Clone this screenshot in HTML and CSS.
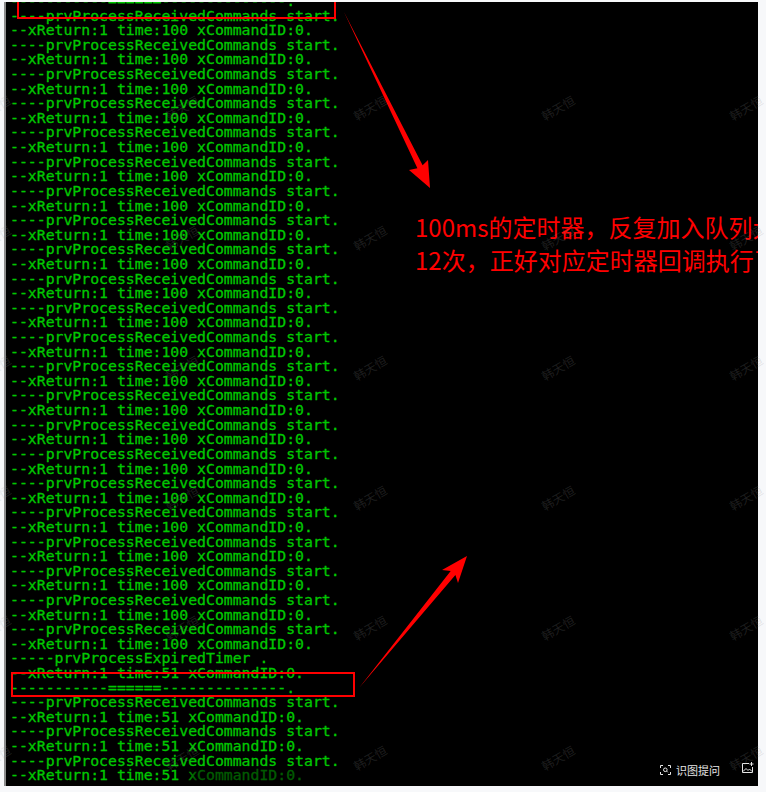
FILE: index.html
```html
<!DOCTYPE html>
<html lang="zh-CN">
<head>
<meta charset="utf-8">
<title>Terminal log</title>
<link rel="stylesheet" href="styles.css">
</head>
<body>
<div class="screen">
  <div class="panel">
<pre class="log">-----------======--------------.
----prvProcessReceivedCommands start.
--xReturn:1 time:100 xCommandID:0.
----prvProcessReceivedCommands start.
--xReturn:1 time:100 xCommandID:0.
----prvProcessReceivedCommands start.
--xReturn:1 time:100 xCommandID:0.
----prvProcessReceivedCommands start.
--xReturn:1 time:100 xCommandID:0.
----prvProcessReceivedCommands start.
--xReturn:1 time:100 xCommandID:0.
----prvProcessReceivedCommands start.
--xReturn:1 time:100 xCommandID:0.
----prvProcessReceivedCommands start.
--xReturn:1 time:100 xCommandID:0.
----prvProcessReceivedCommands start.
--xReturn:1 time:100 xCommandID:0.
----prvProcessReceivedCommands start.
--xReturn:1 time:100 xCommandID:0.
----prvProcessReceivedCommands start.
--xReturn:1 time:100 xCommandID:0.
----prvProcessReceivedCommands start.
--xReturn:1 time:100 xCommandID:0.
----prvProcessReceivedCommands start.
--xReturn:1 time:100 xCommandID:0.
----prvProcessReceivedCommands start.
--xReturn:1 time:100 xCommandID:0.
----prvProcessReceivedCommands start.
--xReturn:1 time:100 xCommandID:0.
----prvProcessReceivedCommands start.
--xReturn:1 time:100 xCommandID:0.
----prvProcessReceivedCommands start.
--xReturn:1 time:100 xCommandID:0.
----prvProcessReceivedCommands start.
--xReturn:1 time:100 xCommandID:0.
----prvProcessReceivedCommands start.
--xReturn:1 time:100 xCommandID:0.
----prvProcessReceivedCommands start.
--xReturn:1 time:100 xCommandID:0.
----prvProcessReceivedCommands start.
--xReturn:1 time:100 xCommandID:0.
----prvProcessReceivedCommands start.
--xReturn:1 time:100 xCommandID:0.
----prvProcessReceivedCommands start.
--xReturn:1 time:100 xCommandID:0.
-----prvProcessExpiredTimer .
--xReturn:1 time:51 xCommandID:0.
-----------======--------------.
----prvProcessReceivedCommands start.
--xReturn:1 time:51 xCommandID:0.
----prvProcessReceivedCommands start.
--xReturn:1 time:51 xCommandID:0.
----prvProcessReceivedCommands start.
--xReturn:1 time:51 xCommandID:0.</pre>
    <svg class="marks" width="766" height="792" viewBox="0 0 766 792" aria-hidden="true">
      <rect x="18" y="-10" width="317" height="28" fill="none" stroke="#ff0000" stroke-width="2"/>
      <rect x="12" y="673" width="342" height="23" fill="none" stroke="#ff0000" stroke-width="2"/>
      <polygon fill="#ff0000" points="344,12 422.6,165.2 428,160 430,188 409,170 417.4,168.3"/>
      <polygon fill="#ff0000" points="359,688 450.7,571.1 442,570 467,556 458,583 455.4,574.9"/>
    </svg>
    <p class="note"><span class="note-line">100ms的定时器，反复加入队列大概</span><span class="note-line">12次，正好对应定时器回调执行了12次</span></p>
    <div class="fade"></div>
    <div class="tools">
      <span class="tool">
        <svg class="tool-icon" width="11" height="10" viewBox="0 0 11 10" aria-hidden="true">
          <path d="M0.5 3V0.5H3M8 0.5H10.5V3M10.5 7V9.5H8M3 9.5H0.5V7" fill="none" stroke="#e6e6e6" stroke-width="1"/>
          <circle cx="5.3" cy="4.8" r="1.8" fill="none" stroke="#e6e6e6" stroke-width="1"/>
          <path d="M6.6 6.1L7.8 7.3" stroke="#e6e6e6" stroke-width="1"/>
        </svg>
        识图提问
      </span>
      <svg class="img-icon" width="12" height="11" viewBox="0 0 12 11" aria-hidden="true">
        <path d="M7 1.5H0.5V10.5H10.5V5" fill="none" stroke="#e6e6e6" stroke-width="1"/>
        <path d="M1 9.5L4 6.5L6 8.5L7.5 7L10 9.5" fill="none" stroke="#e6e6e6" stroke-width="1"/>
        <path d="M9.5 0V4M7.5 2H11.5" stroke="#e6e6e6" stroke-width="1"/>
      </svg>
    </div>
  </div>
  <div class="watermarks" aria-hidden="true">
    <span class="wm" style="left:-24px;top:100px">韩天恒</span>
    <span class="wm" style="left:164px;top:100px">韩天恒</span>
    <span class="wm" style="left:352px;top:100px">韩天恒</span>
    <span class="wm" style="left:540px;top:100px">韩天恒</span>
    <span class="wm" style="left:728px;top:100px">韩天恒</span>
    <span class="wm" style="left:-24px;top:230px">韩天恒</span>
    <span class="wm" style="left:164px;top:230px">韩天恒</span>
    <span class="wm" style="left:352px;top:230px">韩天恒</span>
    <span class="wm" style="left:540px;top:230px">韩天恒</span>
    <span class="wm" style="left:728px;top:230px">韩天恒</span>
    <span class="wm" style="left:-24px;top:360px">韩天恒</span>
    <span class="wm" style="left:164px;top:360px">韩天恒</span>
    <span class="wm" style="left:352px;top:360px">韩天恒</span>
    <span class="wm" style="left:540px;top:360px">韩天恒</span>
    <span class="wm" style="left:728px;top:360px">韩天恒</span>
    <span class="wm" style="left:-24px;top:490px">韩天恒</span>
    <span class="wm" style="left:164px;top:490px">韩天恒</span>
    <span class="wm" style="left:352px;top:490px">韩天恒</span>
    <span class="wm" style="left:540px;top:490px">韩天恒</span>
    <span class="wm" style="left:728px;top:490px">韩天恒</span>
    <span class="wm" style="left:-24px;top:620px">韩天恒</span>
    <span class="wm" style="left:164px;top:620px">韩天恒</span>
    <span class="wm" style="left:352px;top:620px">韩天恒</span>
    <span class="wm" style="left:540px;top:620px">韩天恒</span>
    <span class="wm" style="left:728px;top:620px">韩天恒</span>
    <span class="wm" style="left:-24px;top:750px">韩天恒</span>
    <span class="wm" style="left:164px;top:750px">韩天恒</span>
    <span class="wm" style="left:352px;top:750px">韩天恒</span>
    <span class="wm" style="left:540px;top:750px">韩天恒</span>
    <span class="wm" style="left:728px;top:750px">韩天恒</span>
  </div>
</div>
</body>
</html>
```

FILE: styles.css
```css
html, body {
  margin: 0;
  padding: 0;
}

body {
  background: #f7f8fa;
  width: 766px;
  height: 792px;
  overflow: hidden;
}

.screen {
  position: relative;
  width: 766px;
  height: 792px;
  overflow: hidden;
  padding-top: 2px;
  box-sizing: border-box;
}

.panel {
  position: relative;
  margin-left: 4px;
  width: 752px;
  height: 784px;
  border-left: 2px solid #8c8c8c;
  background: #000;
  overflow: hidden;
}

.log {
  margin: -8px 0 0 4px;
  font-family: "DejaVu Sans Mono", "Liberation Mono", monospace;
  font-size: 14.8px;
  line-height: 14.615px;
  color: #00c800;
  -webkit-text-stroke: 0.3px #00c800;
  white-space: pre;
}

.marks {
  position: absolute;
  left: -6px;
  top: -2px;
}

.note {
  position: absolute;
  left: 409px;
  top: 208px;
  margin: 0;
  font-family: "Noto Sans CJK SC", "Noto Sans", sans-serif;
  font-size: 24px;
  line-height: 33px;
  color: #ff0000;
  white-space: nowrap;
}

.note-line {
  display: block;
}

.fade {
  position: absolute;
  left: 176px;
  right: 0;
  bottom: 0;
  height: 20px;
  background: linear-gradient(to right, rgba(0, 0, 0, 0), rgba(0, 0, 0, 0.55) 14px);
}

.tools {
  position: absolute;
  left: 654px;
  bottom: 10px;
  display: flex;
  align-items: center;
  gap: 22px;
}

.tool {
  display: flex;
  align-items: center;
  gap: 5px;
  font-family: "Noto Sans CJK SC", sans-serif;
  font-size: 11px;
  line-height: 12px;
  color: #e6e6e6;
}

.img-icon {
  display: block;
  margin-top: -6px;
}

.watermarks {
  position: absolute;
  inset: 0;
  pointer-events: none;
}

.wm {
  position: absolute;
  width: 36px;
  font-family: "Noto Sans CJK SC", sans-serif;
  font-size: 12px;
  line-height: 16px;
  color: rgba(150, 150, 150, 0.2);
  transform: rotate(-30deg);
  white-space: nowrap;
}
```
